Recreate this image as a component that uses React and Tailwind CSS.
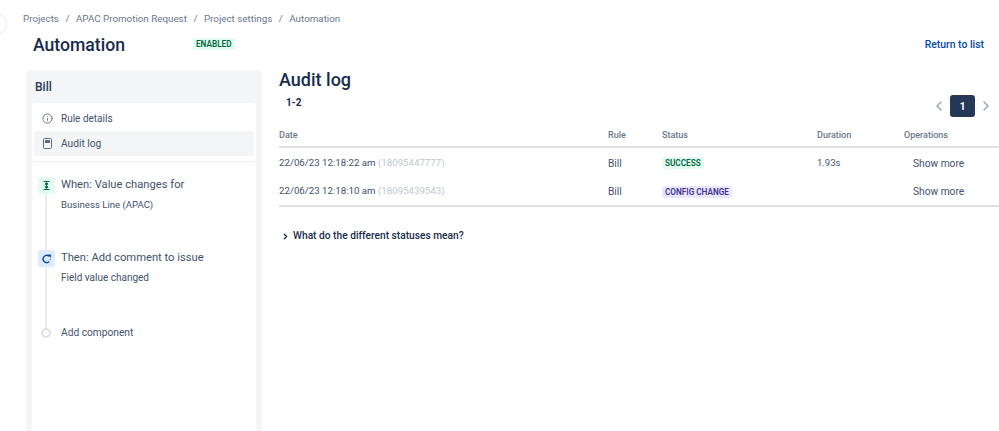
import { ChevronLeft, ChevronRight, Info } from "lucide-react";

function Crumbs() {
  return (
    <div className="flex h-[38px] items-center gap-[6.5px] pl-[23px] text-[9.8px] text-[#6b778c]">
      <span>Projects</span>
      <span>/</span>
      <span>APAC Promotion Request</span>
      <span>/</span>
      <span>Project settings</span>
      <span>/</span>
      <span>Automation</span>
    </div>
  );
}

function Lozenge({ className, children }) {
  return (
    <span className={"rounded-[3px] px-[3px] text-[8.2px] leading-[12px] font-semibold " + className}>
      {children}
    </span>
  );
}

function Step({ icon, title, sub, subSize }) {
  return (
    <div className="relative flex">
      {icon}
      <div className="ml-[6px]">
        <div className="text-[11.2px] leading-[16px] text-[#42526e]">{title}</div>
        <div className={"mt-[4px] leading-[16px] text-[#42526e] " + subSize}>{sub}</div>
      </div>
    </div>
  );
}

function Sidebar() {
  return (
    <aside className="ml-[26px] w-[236px] shrink-0 rounded-t-[4px] bg-[#f4f5f7] px-[6px]">
      <div className="flex h-[33px] items-center pl-[3px] text-[12px] font-medium text-[#253858]">Bill</div>
      <div className="h-[328px] rounded-t-[4px] bg-white px-[2px] pt-[3px]">
        <div className="flex h-[25px] items-center pl-[8px] text-[10px] text-[#42526e]">
          <Info size={11} strokeWidth={2} className="text-[#5e6c84]" />
          <span className="ml-[8px]">Rule details</span>
        </div>
        <div className="flex h-[25px] items-center rounded-[3px] bg-[#f4f5f7] pl-[9px] text-[10.2px] text-[#42526e]">
          <svg width="9" height="11" viewBox="0 0 9 11">
            <rect x="0.5" y="0.5" width="8" height="10" rx="1" fill="none" stroke="#5e6c84" />
            <rect x="2" y="2" width="5" height="3" fill="#5e6c84" />
          </svg>
          <span className="ml-[9px]">Audit log</span>
        </div>
        <div className="mt-[5px] h-px bg-[#ebecf0]" />
        <div className="relative pt-[15px] pl-[4px]">
          <div className="absolute top-[30px] left-[11px] h-[136px] w-[2px] bg-[#ebecf0]" />
          <Step
            icon={
              <div className="flex h-[17px] w-[17px] items-center justify-center rounded-[3px] bg-[#e3fcef]">
                <svg width="9" height="9" viewBox="0 0 9 9" fill="none" stroke="#006644" strokeWidth="1">
                  <path d="M1.5 0.5h6M1.5 8.5h6M4.5 2v5" />
                  <path d="M3 3.2h3L4.5 1.6zM3 5.8h3L4.5 7.4z" fill="#006644" />
                </svg>
              </div>
            }
            title="When: Value changes for"
            sub="Business Line (APAC)"
            subSize="text-[9.6px]"
          />
          <div className="h-[37px]" />
          <Step
            icon={
              <div className="flex h-[17px] w-[17px] items-center justify-center rounded-[3px] bg-[#deebff]">
                <svg width="11" height="10" viewBox="0 0 11 10" fill="none" stroke="#0747a6" strokeWidth="1.4">
                  <path d="M8 2.2A3.6 3.6 0 1 0 8.2 7.6" />
                  <path d="M6.8 0.8h3v2.8z" fill="#0747a6" strokeWidth="0.4" />
                  <circle cx="9.2" cy="5.6" r="0.6" fill="#0747a6" stroke="none" />
                </svg>
              </div>
            }
            title="Then: Add comment to issue"
            sub="Field value changed"
            subSize="text-[10px]"
          />
          <div className="mt-[39px] flex h-[16px] items-center text-[10.2px] text-[#42526e]">
            <div className="relative ml-[3px] h-[10px] w-[10px] rounded-full border-2 border-[#dfe1e6] bg-white" />
            <span className="ml-[10px]">Add component</span>
          </div>
        </div>
      </div>
    </aside>
  );
}

function Row({ date, id, duration, children }) {
  return (
    <div className="grid h-[28.5px] grid-cols-[329px_54px_155px_87px_1fr] items-center pt-[2px] text-[#42526e]">
      <span className="text-[9.7px]">
        {date} <span className="text-[#c1c7d0]">{id}</span>
      </span>
      <span className="text-[10.2px]">Bill</span>
      <span className="flex">{children}</span>
      <span className="text-[9.5px]">{duration}</span>
      <span className="pl-[9px] text-[10.2px]">Show more</span>
    </div>
  );
}

function AuditLog() {
  return (
    <main className="ml-[17px] min-w-0 flex-1">
      <h2 className="text-[18px] leading-[20px] font-medium text-[#172b4d]">Audit log</h2>
      <div className="flex h-[39px] items-start justify-between">
        <span className="mt-[6px] ml-[7px] text-[10px] leading-[14px] font-bold text-[#172b4d]">1-2</span>
        <div className="mt-[5px] flex items-center gap-[3px] pr-[5px]">
          <ChevronLeft size={16} className="text-[#97a0af]" />
          <span className="flex h-[22px] w-[25px] items-center justify-center rounded-[3px] bg-[#253858] text-[10px] font-bold text-white">1</span>
          <ChevronRight size={16} className="text-[#97a0af]" />
        </div>
      </div>
      <div className="grid grid-cols-[329px_54px_155px_87px_1fr] border-b-2 border-[#dfe1e6] pb-[5px] text-[9px] leading-[12px] font-medium text-[#6b778c]">
        <span>Date</span>
        <span>Rule</span>
        <span>Status</span>
        <span>Duration</span>
        <span>Operations</span>
      </div>
      <Row date="22/06/23 12:18:22 am" id="(18095447777)" duration="1.93s">
        <Lozenge className="bg-[#e3fcef] text-[#006644]">SUCCESS</Lozenge>
      </Row>
      <Row date="22/06/23 12:18:10 am" id="(18095439543)" duration="">
        <Lozenge className="bg-[#eae6ff] text-[#403294]">CONFIG CHANGE</Lozenge>
      </Row>
      <div className="border-t-2 border-[#dfe1e6]" />
      <div className="mt-[21px] flex items-center text-[10.2px] leading-[16px] font-medium text-[#172b4d]">
        <ChevronRight size={9} strokeWidth={3.5} className="ml-[2px]" />
        <span className="ml-[3px]">What do the different statuses mean?</span>
      </div>
    </main>
  );
}

export default function App() {
  return (
    <div className="relative h-[431px] w-[999px] overflow-hidden bg-white font-['Roboto',sans-serif]">
      {/* clipped sidebar toggle at the left edge */}
      <div className="absolute top-[14px] left-[-13px] h-[20px] w-[20px] rounded-full border border-[#ebecf0] bg-white" />
      <Crumbs />
      <div className="flex h-[32px] items-start">
        <h1 className="ml-[33px] w-[160px] text-[17.6px] leading-[15px] font-medium text-[#172b4d]">Automation</h1>
        <Lozenge className="bg-[#e3fcef] text-[#006644]">ENABLED</Lozenge>
        <a className="mr-[15px] ml-auto text-[10.4px] leading-[13px] font-medium text-[#0747a6]">Return to list</a>
      </div>
      <div className="flex">
        <Sidebar />
        <AuditLog />
      </div>
    </div>
  );
}
